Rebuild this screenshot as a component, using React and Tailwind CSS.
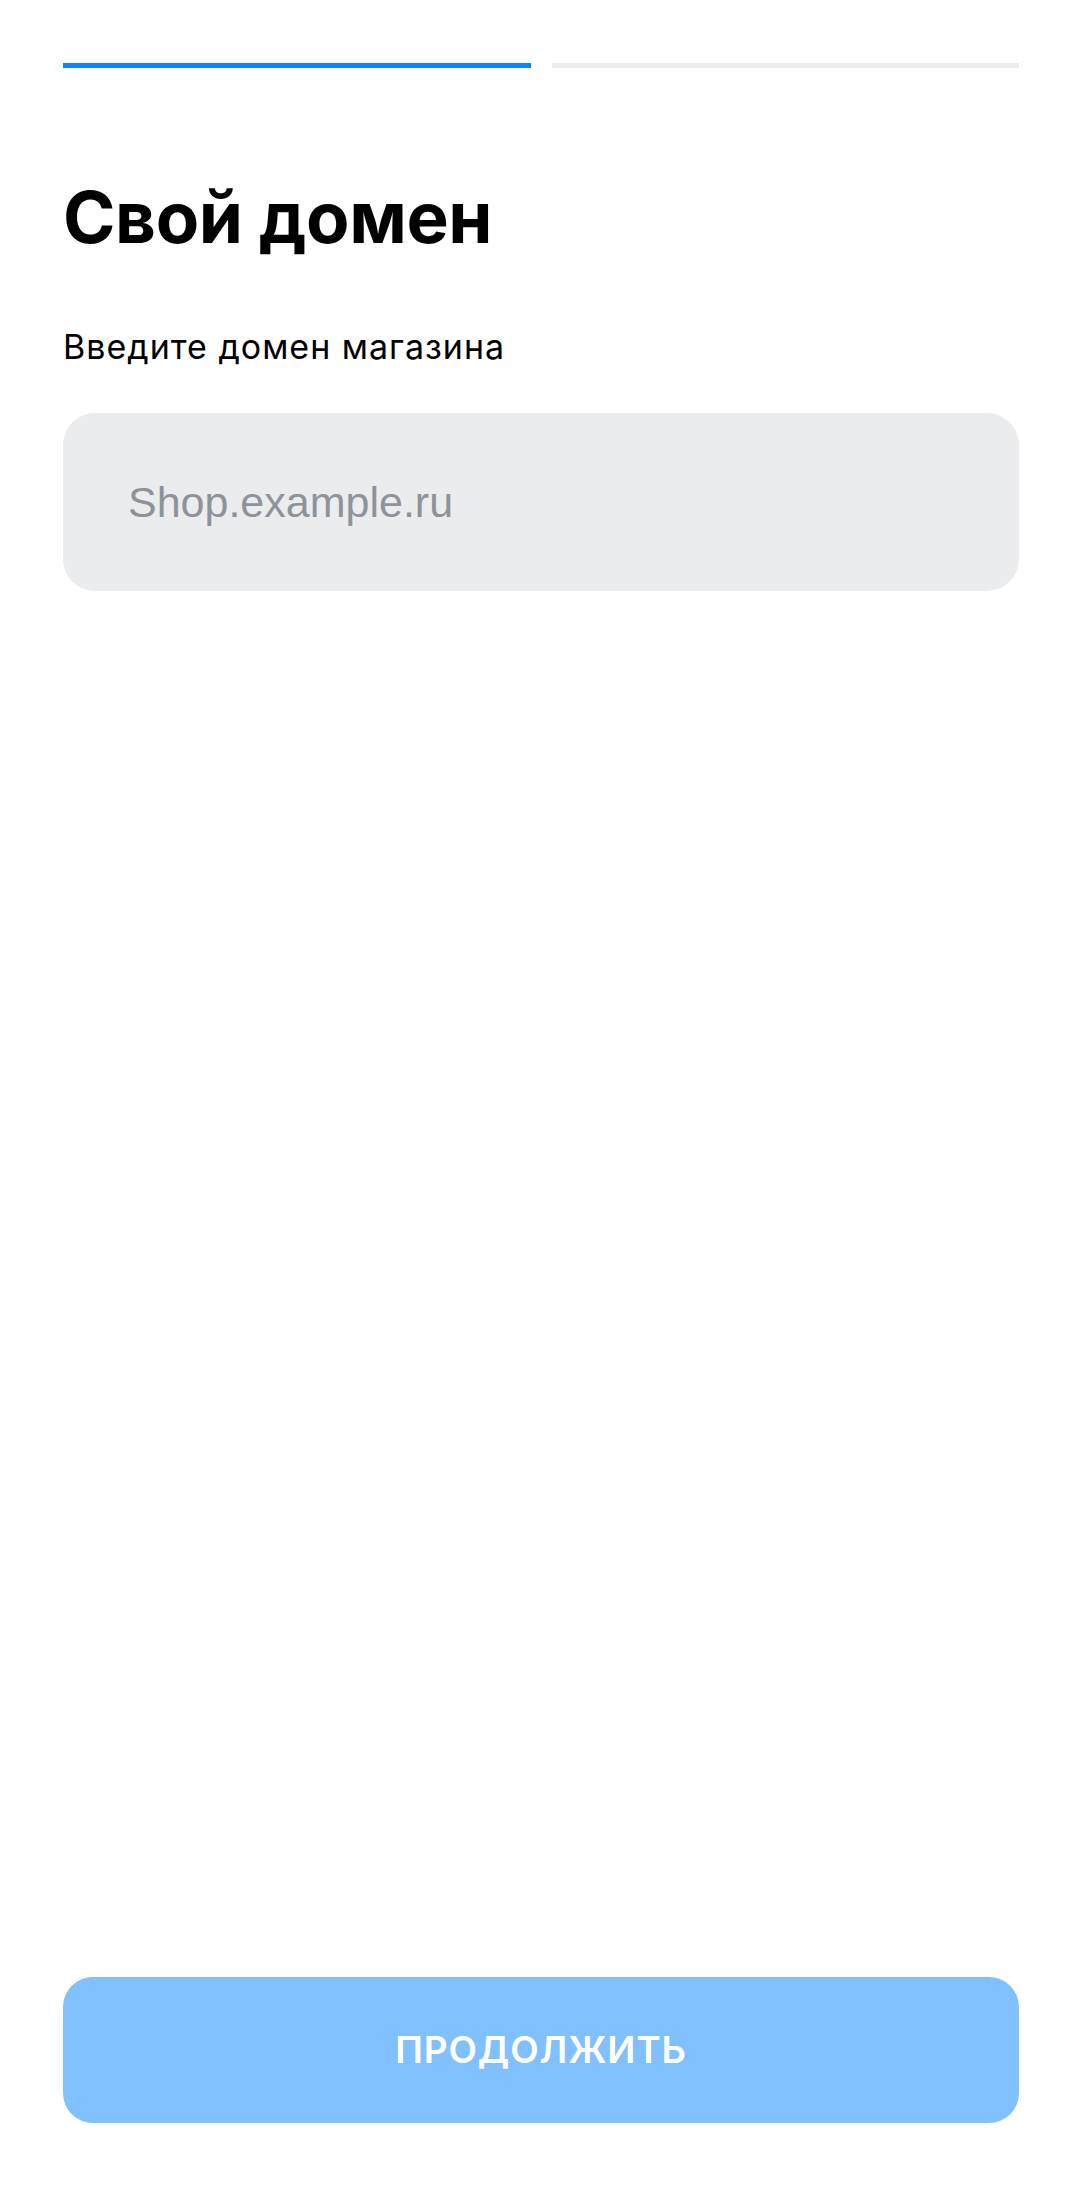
import React from "react";

const App = () => {
  return (
    <div className="flex h-[2202px] flex-col bg-white px-[63px] font-['Inter',sans-serif]">
      {/* Steps */}
      <div className="flex gap-[21px] pt-[63px]">
        <div className="h-[5px] flex-1 bg-[#0a84ff]" />
        <div className="h-[5px] flex-1 bg-[#ebecee]" />
      </div>

      <h1 className="mt-[109px] text-[71px] font-bold leading-[80px] tracking-[-0.4px] text-black">
        Свой домен
      </h1>

      <p className="mt-[70px] text-[34px] leading-[40px] tracking-[1px] text-black">
        Введите домен магазина
      </p>

      <input
        type="text"
        placeholder="Shop.example.ru"
        className="mt-[46px] h-[178px] w-full rounded-[32px] bg-[#ebecee] px-[65px] font-['Liberation_Sans',sans-serif] text-[43px] text-black outline-none placeholder:text-[#8e939b]"
      />

      <div className="flex-1" />

      <button className="mb-[79px] h-[146px] w-full rounded-[30px] bg-[#80c0fe] text-[37px] font-semibold tracking-[0.9px] text-white">
        ПРОДОЛЖИТЬ
      </button>
    </div>
  );
};

export default App;
